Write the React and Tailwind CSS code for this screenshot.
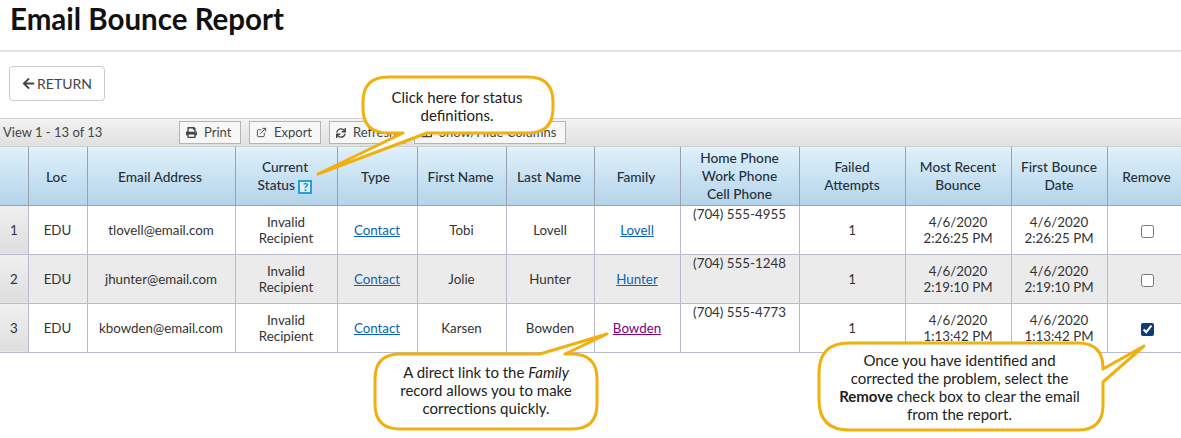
import React from "react";
import { FaArrowLeft, FaPrint, FaSync, FaColumns } from "react-icons/fa";
import { FiExternalLink } from "react-icons/fi";

const widths = [28, 59, 148, 102, 80, 89, 88, 86, 119, 106, 106, 96, 74];
const rows = [
  { n: 1, email: "tlovell@email.com", first: "Tobi", last: "Lovell", phone: "(704) 555-4955", d: "2:26:25 PM" },
  { n: 2, email: "jhunter@email.com", first: "Jolie", last: "Hunter", phone: "(704) 555-1248", d: "2:19:10 PM" },
  { n: 3, email: "kbowden@email.com", first: "Karsen", last: "Bowden", phone: "(704) 555-4773", d: "1:13:42 PM", visited: true, checked: true },
];

function Th({ children, className = "" }) {
  return (
    <th className={`h-[58px] border-r border-b border-[#9aa3ad] bg-gradient-to-b from-[#dff1fb] to-[#b4d4ea] px-0 pb-0 text-center text-[13.7px] leading-[18px] font-medium text-[#26313b] ${className}`}>
      {children}
    </th>
  );
}

function Td({ children, className = "" }) {
  return (
    <td className={`border-r border-b border-[#b9b9cf] p-0 text-center text-[13.33px] leading-[16px] text-[#333] ${className}`}>
      {children}
    </td>
  );
}

function ToolButton({ icon, label, className = "" }) {
  return (
    <div className={`flex h-[23px] shrink-0 items-center gap-[7px] overflow-hidden border border-[#b5b5b5] bg-[#f7f7f7] pl-[6px] text-[13px] whitespace-nowrap text-[#444] ${className}`}>
      {icon}
      <span>{label}</span>
    </div>
  );
}

function Callout({ className, w, h, path, textClass, children }) {
  return (
    <div className={`absolute ${className}`}>
      <svg width={w} height={h} viewBox={`0 0 ${w} ${h}`} className="block">
        <path d={path} fill="#ffffff" stroke="#f0b010" strokeWidth="3" strokeLinejoin="round" />
      </svg>
      <div className={`absolute text-center text-[15px] leading-[18px] text-[#222] ${textClass}`}>{children}</div>
    </div>
  );
}

export default function App() {
  return (
    <div className="relative h-[438px] w-[1181px] overflow-hidden bg-white font-['Lato','Liberation_Sans',sans-serif]">
      <div className="h-[52px] border-b-2 border-[#e2e2e2] pt-[1px] pl-[10px] text-[29.5px] leading-[36px] font-bold text-[#111]">
        Email Bounce Report
      </div>
      <div className="pt-[14px] pl-[9px]">
        <div className="flex h-[35px] w-[96px] items-center justify-center gap-[2px] rounded-[4px] border border-[#ccc] bg-white text-[14px] text-[#444]">
          <FaArrowLeft className="text-[13px]" />
          <span>RETURN</span>
        </div>
      </div>
      <div className="mt-[17px] flex h-[29px] items-center gap-[8px] border-t border-b border-[#cfcfcf] bg-gradient-to-b from-[#f2f2f2] to-[#e0e0e0] pl-[3px]">
        <div className="w-[168px] shrink-0 text-[13px] text-[#444]">View 1 - 13 of 13</div>
        <ToolButton className="w-[62px]" icon={<FaPrint className="text-[11px]" />} label="Print" />
        <ToolButton className="w-[72px]" icon={<FiExternalLink className="text-[11px]" />} label="Export" />
        <ToolButton className="w-[77px]" icon={<FaSync className="text-[10px]" />} label="Refresh" />
        <ToolButton className="w-[152px]" icon={<FaColumns className="text-[11px]" />} label="Show/Hide Columns" />
      </div>
      <table className="table-fixed border-collapse" style={{ width: 1181 }}>
        <colgroup>
          {widths.map((w, i) => (
            <col key={i} style={{ width: w }} />
          ))}
        </colgroup>
        <thead>
          <tr>
            <Th></Th>
            <Th className="pt-[2px] pr-[2px]">Loc</Th>
            <Th className="pt-[2px] pr-[2px]">Email Address</Th>
            <Th className="pr-[2px]">
              Current
              <br />
              Status{" "}
              <span className="inline-block h-[14px] w-[14px] border-2 border-[#2a9fd6] bg-[#d9f0fb] text-center align-[-1px] text-[12px] leading-[10px] font-black text-[#1b8fcb]">
                ?
              </span>
            </Th>
            <Th className="pt-[2px] pr-[3px]">Type</Th>
            <Th className="pt-[2px] pr-[2px]">First Name</Th>
            <Th className="pt-[2px] pr-[2px]">Last Name</Th>
            <Th className="pt-[2px] pr-[2px]">Family</Th>
            <Th>
              Home Phone
              <br />
              Work Phone
              <br />
              Cell Phone
            </Th>
            <Th>
              Failed
              <br />
              Attempts
            </Th>
            <Th>
              Most Recent
              <br />
              Bounce
            </Th>
            <Th>
              First Bounce
              <br />
              Date
            </Th>
            <Th className="pt-[2px] pl-[5px]">Remove</Th>
          </tr>
        </thead>
        <tbody>
          {rows.map((r) => (
            <tr key={r.n} className={`h-[49px] ${r.n === 2 ? "bg-[#ebebeb]" : "bg-white"}`}>
              <Td className="bg-gradient-to-b from-[#f0f0f0] to-[#dedede]">{r.n}</Td>
              <Td>EDU</Td>
              <Td>{r.email}</Td>
              <Td>
                Invalid
                <br />
                Recipient
              </Td>
              <Td>
                <span className="text-[#0b63b5] underline">Contact</span>
              </Td>
              <Td>{r.first}</Td>
              <Td>{r.last}</Td>
              <Td>
                <span className={r.visited ? "text-[#800080] underline" : "text-[#0b63b5] underline"}>{r.last}</span>
              </Td>
              <Td className="align-top">{r.phone}</Td>
              <Td>1</Td>
              <Td>
                4/6/2020
                <br />
                {r.d}
              </Td>
              <Td>
                4/6/2020
                <br />
                {r.d}
              </Td>
              <Td className="pl-[7px]">
                <input
                  type="checkbox"
                  readOnly
                  checked={!!r.checked}
                  className="m-0 h-[13px] w-[13px] align-middle accent-[#0f3a7c]"
                />
              </Td>
            </tr>
          ))}
        </tbody>
      </table>

      <Callout
        className="top-[70px] left-[310px]"
        w={250}
        h={112}
        path="M78 7 H218 Q243 7 243 32 V38 Q243 63 218 63 H117 L8 104 L93 63 H78 Q53 63 53 38 V32 Q53 7 78 7 Z"
        textClass="top-[18px] left-[59px] w-[176px]"
      >
        Click here for status definitions.
      </Callout>

      <Callout
        className="top-[328px] left-[368px]"
        w={245}
        h={108}
        path="M32 26 H172 L239 6 L197 26 H204 Q229 26 229 51 V76 Q229 101 204 101 H32 Q7 101 7 76 V51 Q7 26 32 26 Z"
        textClass="top-[35px] left-[14px] w-[208px]"
      >
        A direct link to the <i>Family</i> record allows you to make corrections quickly.
      </Callout>

      <Callout
        className="top-[338px] left-[812px]"
        w={338}
        h={98}
        path="M37 5 H266 Q291 5 291 30 V31 L332 8 L291 44 V67 Q291 92 266 92 H37 Q7 92 7 62 V35 Q7 5 37 5 Z"
        textClass="top-[13px] left-[25px] w-[245px]"
      >
        Once you have identified and corrected the problem, select the <b>Remove</b> check box to clear the email from the report.
      </Callout>
    </div>
  );
}
